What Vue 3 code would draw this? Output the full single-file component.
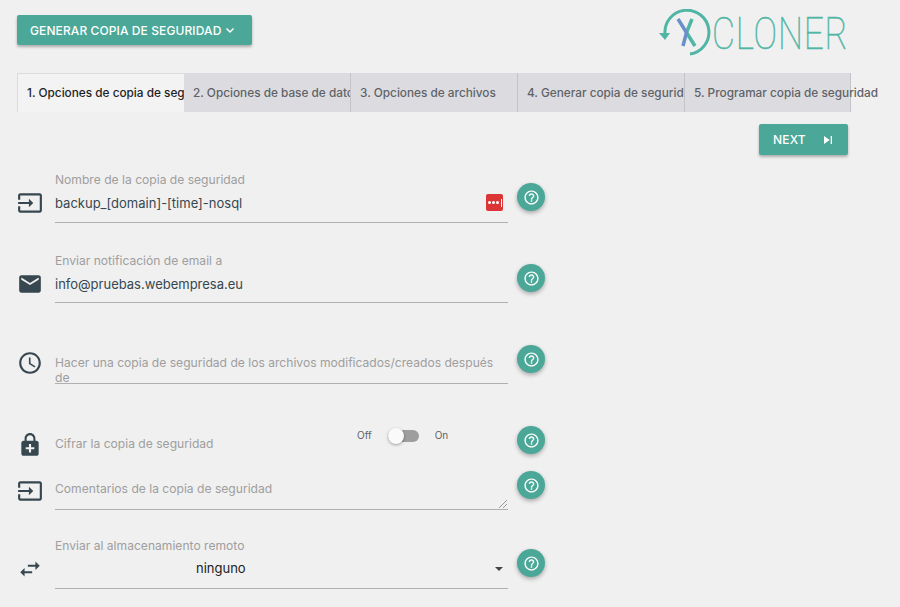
<script setup>
const tabs = [
  '1. Opciones de copia de seguridad',
  '2. Opciones de base de datos',
  '3. Opciones de archivos',
  '4. Generar copia de seguridad',
  '5. Programar copia de seguridad',
];

const icons = {
  input: 'M21 3.01H3c-1.1 0-2 .9-2 2V9h2V4.99h18v14.03H3V15H1v4.01c0 1.1.9 1.98 2 1.98h18c1.1 0 2-.88 2-1.98v-14c0-1.11-.9-2-2-2zM11 16l4-4-4-4v3H1v2h10v3z',
  email: 'M20 4H4c-1.1 0-1.99.9-1.99 2L2 18c0 1.1.9 2 2 2h16c1.1 0 2-.9 2-2V6c0-1.1-.9-2-2-2zm0 4l-8 5-8-5V6l8 5 8-5v2z',
  clock: 'M11.99 2C6.47 2 2 6.48 2 12s4.47 10 9.99 10C17.52 22 22 17.52 22 12S17.52 2 11.99 2zM12 20c-4.42 0-8-3.58-8-8s3.58-8 8-8 8 3.58 8 8-3.58 8-8 8zm.5-13H11v6l5.25 3.15.75-1.23-4.5-2.67z',
  lock: 'M18 8h-1V6c0-2.76-2.24-5-5-5S7 3.24 7 6v2H6c-1.1 0-2 .9-2 2v10c0 1.1.9 2 2 2h12c1.1 0 2-.9 2-2V10c0-1.1-.9-2-2-2zM8.9 6c0-1.71 1.39-3.1 3.1-3.1s3.1 1.39 3.1 3.1v2H8.9V6zM16 16h-3v3h-2v-3H8v-2h3v-3h2v3h3v2z',
  swap: 'M6.99 11L3 15l3.99 4v-3H14v-2H6.99v-3zM21 9l-4-4v3h-7v2h7v3l4-4z',
};

const helpPath = 'M11 18h2v-2h-2v2zm1-16C6.48 2 2 6.48 2 12s4.48 10 10 10 10-4.48 10-10S17.52 2 12 2zm0 18c-4.41 0-8-3.59-8-8s3.59-8 8-8 8 3.59 8 8-3.59 8-8 8zm0-14c-2.21 0-4 1.79-4 4h2c0-1.1.9-2 2-2s2 .9 2 2c0 2-3 1.75-3 5h2c0-2.25 3-2.5 3-5 0-2.21-1.79-4-4-4z';
</script>

<template>
  <div class="page">
    <header class="top">
      <button class="btn btn-generate">
        GENERAR COPIA DE SEGURIDAD
        <svg width="12" height="12" viewBox="0 0 12 12"><path d="M2.500 4.500l3.500 3.500 3.500-3.500" fill="none" stroke="#fff" stroke-width="1.500" /></svg>
      </button>
      <div class="logo">
        <svg width="52" height="48" viewBox="0 0 52 48">
          <path d="M6 25A22 22 0 1 1 31 45" fill="none" stroke="#4fb5a5" stroke-width="3" />
          <path d="M0 24l11 0-5 7z" fill="#4fb5a5" />
          <path d="M33 10L27.500 23.500 36 37" fill="none" stroke="#4fb5a5" stroke-width="3.500" />
          <path d="M19 10L27.500 23.500 24 37" fill="none" stroke="#6b8fc9" stroke-width="3.500" />
        </svg>
        <span class="logo-text">CLONER</span>
      </div>
    </header>

    <nav class="tabs">
      <div v-for="(tab, i) in tabs" :key="tab" class="tab" :class="{ active: i === 0 }">{{ tab }}</div>
    </nav>

    <div class="next-row">
      <button class="btn btn-next">
        NEXT
        <svg width="16" height="16" viewBox="0 0 24 24"><path d="M6 18l8.500-6L6 6v12zM16 6v12h2V6h-2z" fill="#fff" /></svg>
      </button>
    </div>

    <section class="form">
      <div class="row r-full">
        <svg class="icon" viewBox="0 0 24 24"><path :d="icons.input" /></svg>
        <div class="field field-tall">
          <div class="label">Nombre de la copia de seguridad</div>
          <div class="value">backup_[domain]-[time]-nosql</div>
          <span class="lastpass">
            <i></i><i></i><i></i><b></b>
          </span>
        </div>
        <button class="help"><svg viewBox="0 0 24 24"><path :d="helpPath" /></svg></button>
      </div>

      <div class="row r-full">
        <svg class="icon" viewBox="0 0 24 24"><path :d="icons.email" /></svg>
        <div class="field">
          <div class="label">Enviar notificación de email a</div>
          <div class="value">info@pruebas.webempresa.eu</div>
        </div>
        <button class="help"><svg viewBox="0 0 24 24"><path :d="helpPath" /></svg></button>
      </div>

      <div class="row r-full">
        <svg class="icon icon-clock" viewBox="0 0 24 24"><path :d="icons.clock" /></svg>
        <div class="field field-wrap">
          <div class="label-wrap">Hacer una copia de seguridad de los archivos modificados/creados después de</div>
        </div>
        <button class="help"><svg viewBox="0 0 24 24"><path :d="helpPath" /></svg></button>
      </div>

      <div class="row r-toggle">
        <svg class="icon icon-lock" viewBox="0 0 24 24"><path :d="icons.lock" /></svg>
        <div class="toggle-field">
          <span class="toggle-label">Cifrar la copia de seguridad</span>
          <div class="toggle">
            <span>Off</span>
            <span class="switch"><span class="knob"></span></span>
            <span>On</span>
          </div>
        </div>
        <button class="help"><svg viewBox="0 0 24 24"><path :d="helpPath" /></svg></button>
      </div>

      <div class="row r-comment">
        <svg class="icon icon-comment" viewBox="0 0 24 24"><path :d="icons.input" /></svg>
        <div class="field field-comment">
          <div class="comment-label">Comentarios de la copia de seguridad</div>
          <svg class="resizer" width="10" height="10" viewBox="0 0 10 10"><path d="M1 9l8-8M5 9l4-4" stroke="#999" stroke-width="1" /></svg>
        </div>
        <button class="help"><svg viewBox="0 0 24 24"><path :d="helpPath" /></svg></button>
      </div>

      <div class="row r-full">
        <svg class="icon icon-swap" viewBox="0 0 24 24"><path :d="icons.swap" /></svg>
        <div class="field field-tall field-select">
          <div class="label">Enviar al almacenamiento remoto</div>
          <div class="value select-value">ninguno</div>
          <span class="caret"></span>
        </div>
        <button class="help"><svg viewBox="0 0 24 24"><path :d="helpPath" /></svg></button>
      </div>
    </section>
  </div>
</template>

<style scoped>
.page {
  height: 607px;
  overflow: hidden;
  padding: 0 17px;
  box-sizing: border-box;
  background: #f0f0f0;
  font-family: Inter, "Liberation Sans", sans-serif;
  color: #3c4043;
}

.top {
  display: flex;
  justify-content: space-between;
  align-items: flex-start;
  height: 73px;
}

.btn {
  display: flex;
  align-items: center;
  border: 0;
  border-radius: 2px;
  background: #4ba797;
  color: #fff;
  font-family: inherit;
  font-weight: 500;
  box-shadow: 0 2px 3px rgba(0, 0, 0, 0.28);
}

.btn-generate {
  margin-top: 15px;
  width: 235px;
  height: 30px;
  padding: 0 0 0 13px;
  gap: 3px;
  font-size: 12px;
  letter-spacing: 0.1px;
}

.logo {
  display: flex;
  align-items: center;
  margin: 8px 36px 0 0;
  color: #4fb5a5;
}

.logo-text {
  margin-left: 1px;
  padding-top: 2px;
  font-family: Roboto, sans-serif;
  font-weight: 100;
  font-size: 45px;
  line-height: 48px;
  letter-spacing: 1px;
  transform: scaleX(0.785);
  transform-origin: left;
  width: 135px;
  -webkit-text-stroke: 0.5px #4fb5a5;
}

.tabs {
  display: flex;
  height: 39px;
}

.tab {
  flex: 0 0 167px;
  min-width: 0;
  box-sizing: border-box;
  padding: 0 0 0 9px;
  background: #dcdce0;
  border-right: 1px solid #c4c4c8;
  color: #5f6368;
  font-size: 11.8px;
  font-weight: 500;
  line-height: 40px;
  white-space: nowrap;
  overflow: hidden;
}

.tab:last-child {
  flex-basis: 166px;
  overflow: visible;
}

.tab.active {
  background: #f3f3f3;
  color: #1f1f1f;
  border-left: 1px solid #dcdcdc;
  border-top: 1px solid #dcdcdc;
  border-right: 0;
  line-height: 39px;
}

.next-row {
  display: flex;
  justify-content: flex-end;
  padding: 12px 35px 0 0;
  height: 58px;
  box-sizing: border-box;
}

.btn-next {
  width: 89px;
  height: 31px;
  padding: 0 0 0 14px;
  gap: 14px;
  font-size: 12px;
  letter-spacing: 0.2px;
}

.row {
  display: grid;
  grid-template-columns: 38px 453px 28px;
  align-items: start;
  width: 528px;
}

.r-full { height: 81px; }
.r-toggle { height: 45px; }
.r-comment { height: 78px; }

.row:last-child { height: 71px; }

.icon {
  width: 26px;
  height: 26px;
  margin-top: 20px;
  fill: #37474f;
}

.icon-clock { margin-top: 18px; }
.icon-lock { margin-top: 19px; }
.icon-swap { margin-top: 20px; }

.field {
  position: relative;
  box-sizing: border-box;
  height: 52px;
  border-bottom: 1px solid #b0b0b0;
}

.field-tall {
  height: 53px;
}

.label,
.label-wrap,
.comment-label,
.toggle-label {
  color: #9e9e9e;
  font-size: 12.1px;
}

.label {
  line-height: 20px;
}

.value {
  margin-top: 3px;
  font-size: 13px;
  line-height: 20px;
  color: #37474f;
}

.label-wrap {
  padding-top: 23px;
  line-height: 15px;
  width: 445px;
}

.field-wrap {
  overflow: hidden;
}

.comment-label {
  padding-top: 23px;
  line-height: 16px;
}

.resizer {
  position: absolute;
  right: 0;
  bottom: 0;
}

.select-value {
  margin-top: 2px;
  padding-left: 141px;
  color: #212121;
}

.caret {
  position: absolute;
  right: 5px;
  bottom: 17px;
  border: 4.500px solid transparent;
  border-top: 4px solid #444;
  border-bottom: 0;
}

.lastpass {
  position: absolute;
  right: 5px;
  top: 24px;
  display: flex;
  align-items: center;
  justify-content: center;
  gap: 1px;
  width: 17px;
  height: 17px;
  border-radius: 2px;
  background: #dc3535;
}

.lastpass i {
  width: 3px;
  height: 3px;
  border-radius: 50%;
  background: #fff;
}

.lastpass b {
  width: 1px;
  height: 8px;
  margin-left: 1px;
  background: #fff;
}

.help {
  display: flex;
  align-items: center;
  justify-content: center;
  width: 28px;
  height: 28px;
  margin: 13px 0 0 9px;
  padding: 0;
  border: 0;
  border-radius: 50%;
  background: #4ba797;
  box-shadow: 0 2px 4px rgba(0, 0, 0, 0.3);
}

.help svg {
  width: 17px;
  height: 17px;
  fill: #fff;
}

.toggle-field {
  display: flex;
  align-items: flex-start;
}

.toggle-label {
  width: 302px;
  margin-top: 23px;
  line-height: 16px;
}

.toggle {
  display: flex;
  align-items: center;
  margin-top: 15px;
  height: 16px;
  font-size: 10px;
  color: #5f6368;
}

.toggle > span:not(.switch) {
  margin-top: -2px;
}

.switch {
  position: relative;
  width: 31px;
  height: 12px;
  margin: 0 16px;
  border-radius: 6px;
  background: #9e9e9e;
}

.knob {
  position: absolute;
  left: 0;
  top: -2px;
  width: 16px;
  height: 16px;
  border-radius: 50%;
  background: #fafafa;
  box-shadow: 0 1px 3px rgba(0, 0, 0, 0.35);
}
</style>

<style>
body {
  background: #f0f0f0;
}
</style>
